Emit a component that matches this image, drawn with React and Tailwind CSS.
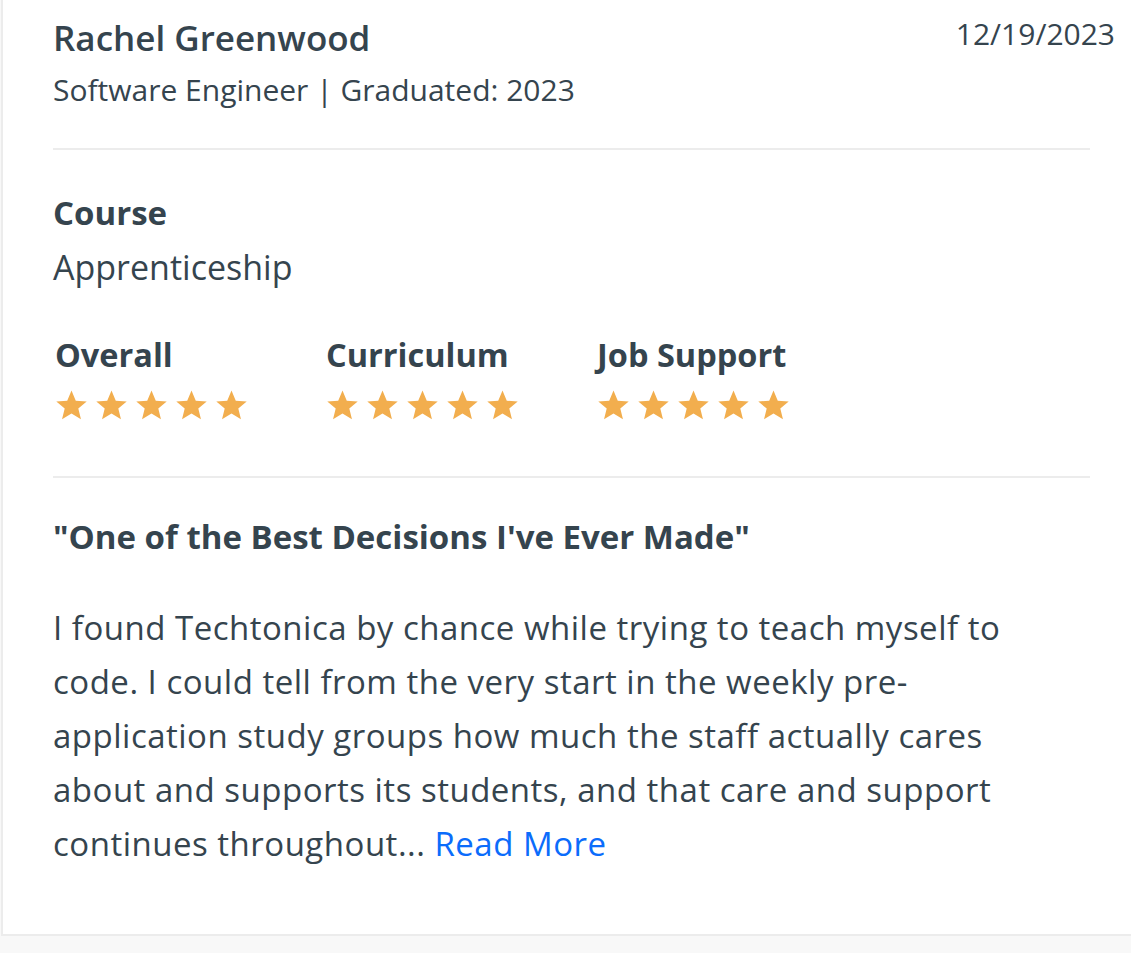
const Star = () => (
    <svg viewBox="0 0 24 24" className="w-[33px] h-[32px]" fill="#f2ae4e">
        <path d="M12 1.2l3.2 7.6 8.2.6-6.3 5.3 2 8-7.1-4.4-7.1 4.4 2-8L.6 9.4l8.2-.6z" />
    </svg>
);

const Rating = ({ label }) => (
    <div className="w-[271px]">
        <div className="text-[32.5px] leading-[40px] font-bold pl-[2px]">{label}</div>
        <div className="flex gap-[7px] mt-[14px] pl-[2px]">
            {[0, 1, 2, 3, 4].map((i) => <Star key={i} />)}
        </div>
    </div>
);

export default function App() {
    return (
        <div className="min-h-[953px] bg-[#f8f8f8] text-[#35444e]" style={{ fontFamily: '"Open Sans", sans-serif' }}>
            <div className="ml-px bg-white border-l-2 border-b-2 border-[#ececec] pl-[50px] pr-[41px] pt-[16px] pb-[63px]">
                {/* Header */}
                <div className="flex justify-between">
                    <div>
                        <div className="text-[35px] leading-[44px] font-semibold">Rachel Greenwood</div>
                        <div className="text-[30px] leading-[40px] mt-[10px]">Software Engineer | Graduated: 2023</div>
                    </div>
                    <div className="text-[30px] leading-[36px] -mr-[25px]">12/19/2023</div>
                </div>

                <div className="h-[2px] bg-[#ececec] mt-[38px]" />

                {/* Course */}
                <div className="text-[33px] leading-[40px] font-bold mt-[43px]">Course</div>
                <div className="text-[34px] leading-[40px] mt-[14px]">Apprenticeship</div>

                {/* Ratings */}
                <div className="flex mt-[48px]">
                    <Rating label="Overall" />
                    <Rating label="Curriculum" />
                    <Rating label="Job Support" />
                </div>

                <div className="h-[2px] bg-[#ececec] mt-[55px]" />

                {/* Review */}
                <div className="text-[33px] leading-[40px] font-bold mt-[39px]">"One of the Best Decisions I've Ever Made"</div>
                <p className="text-[33px] leading-[54px] tracking-[0.5px] mt-[44px] whitespace-nowrap">
                    I found Techtonica by chance while trying to teach myself to<br />
                    code. I could tell from the very start in the weekly pre-<br />
                    application study groups how much the staff actually cares<br />
                    about and supports its students, and that care and support<br />
                    continues throughout...{' '}
                    <a href="#" className="text-[#0b6cfb]">Read More</a>
                </p>
            </div>
        </div>
    );
}
